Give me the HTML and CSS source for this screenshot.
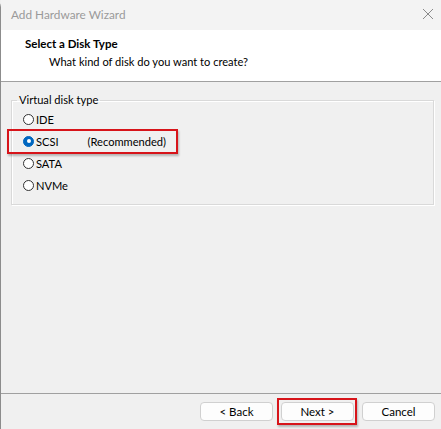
FILE: index.html
```html
<!DOCTYPE html>
<html>
<head>
<meta charset="utf-8">
<link rel="stylesheet" href="styles.css">
</head>
<body>
<div class="window">
  <div class="titlebar">
    <span class="title">Add Hardware Wizard</span>
    <svg class="close" width="12" height="12" viewBox="0 0 12 12"><path d="M1 1 L11 11 M11 1 L1 11" stroke="#8a8a8a" stroke-width="1" fill="none"/></svg>
  </div>
  <div class="header">
    <div class="h-title">Select a Disk Type</div>
    <div class="h-sub">What kind of disk do you want to create?</div>
  </div>
  <div class="content">
    <fieldset class="group">
      <legend class="legend">Virtual disk type</legend>
      <div class="radio-row"><span class="radio"></span><span class="label">IDE</span></div>
      <div class="radio-row highlight"><span class="radio checked"></span><span class="label">SCSI</span><span class="rec">(Recommended)</span></div>
      <div class="radio-row"><span class="radio"></span><span class="label">SATA</span></div>
      <div class="radio-row"><span class="radio"></span><span class="label">NVMe</span></div>
    </fieldset>
  </div>
  <div class="footer">
    <button class="btn">&lt; Back</button>
    <button class="btn btn-next">Next &gt;</button>
    <button class="btn">Cancel</button>
  </div>
</div>
</body>
</html>
```
FILE: styles.css
```css
html, body {
  margin: 0;
  padding: 0;
  width: 441px;
  height: 429px;
  overflow: hidden;
  background: #f0f0f0;
}
.window {
  width: 441px;
  height: 429px;
  box-sizing: border-box;
  display: flex;
  flex-direction: column;
  background: #f0f0f0;
  border-left: 1px solid #8c8c8c;
  border-top-left-radius: 7px;
  font-family: "Lato", "Segoe UI", sans-serif;
  font-size: 11.1px;
  color: #000;
}
.titlebar {
  height: 30px;
  flex: none;
  display: flex;
  align-items: center;
  justify-content: space-between;
  padding: 0 7px 2px 10px;
  box-sizing: border-box;
  background: #f3f3f3;
}
.title {
  color: #9a9a9a;
  font-size: 11.8px;
}
.close { display: block; }
.header {
  height: 52px;
  flex: none;
  box-sizing: border-box;
  background: #fff;
  border-bottom: 1px solid #a0a0a0;
  padding: 6px 0 0 24px;
}
.h-title {
  font-weight: bold;
  line-height: 16px;
  font-size: 11.5px;
}
.h-sub {
  padding-left: 24px;
  line-height: 16px;
  margin-top: 2px;
}
.content {
  flex: 1;
  padding: 11px 7px 0 10px;
}
.group {
  margin: 0;
  padding: 1px 0 9px 11px;
  border: 1px solid #d9d9d9;
  box-shadow: 1px 1px 0 #fff, inset 1px 1px 0 #fff;
  height: 112px;
  box-sizing: border-box;
}
.legend {
  padding: 0 2px;
  margin-left: -6px;
  line-height: 14px;
}
.radio-row {
  display: flex;
  align-items: center;
  height: 22px;
  position: relative;
  width: max-content;
}
.radio {
  width: 9px;
  height: 9px;
  border: 1px solid #333;
  border-radius: 50%;
  background: #fff;
  margin-right: 2px;
  box-sizing: content-box;
}
.radio.checked {
  background: #0067c0;
  border-color: #0067c0;
  position: relative;
}
.radio.checked::after {
  content: "";
  position: absolute;
  left: 2.5px;
  top: 2.5px;
  width: 4px;
  height: 4px;
  border-radius: 50%;
  background: #fff;
}
.rec { margin-left: 29px; }
.highlight::after {
  content: "";
  position: absolute;
  left: -16px;
  right: -12px;
  top: -1px;
  bottom: -2px;
  border: 2px solid #d7141a;
  box-shadow: 1px 2px 2px rgba(0,0,0,0.25);
  pointer-events: none;
}
.footer {
  height: 36px;
  flex: none;
  border-top: 1px solid #a0a0a0;
  display: flex;
  justify-content: flex-end;
  align-items: flex-start;
  gap: 8px;
  padding: 8px 6px 0 0;
  box-sizing: border-box;
}
.btn {
  width: 73px;
  height: 19px;
  font-family: inherit;
  font-size: 11.5px;
  color: #000;
  background: #fdfdfd;
  border: 1px solid #d0d0d0;
  border-radius: 4px;
  padding: 0;
  position: relative;
  line-height: 16px;
}
.btn-next::after {
  content: "";
  position: absolute;
  left: -5px;
  right: -4px;
  top: -5px;
  bottom: -5px;
  border: 2px solid #d7141a;
  box-shadow: 1px 2px 2px rgba(0,0,0,0.25);
}
```
